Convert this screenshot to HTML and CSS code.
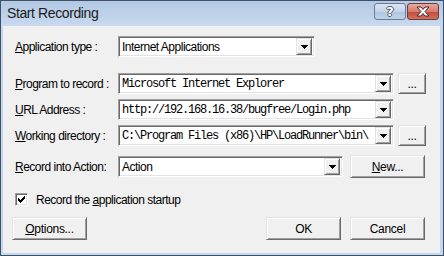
FILE: index.html
```html
<!DOCTYPE html>
<html lang="en">
<head>
    <meta charset="UTF-8">
    <meta name="viewport" content="width=device-width, initial-scale=1.0">
    <title>Start Recording</title>
    <link rel="stylesheet" href="styles.css">
</head>
<body>
    <div class="window">
        <div class="titlebar">
            <span class="title">Start Recording</span>
            <span class="cap help">?</span>
            <span class="cap close">
                <svg width="14" height="11" viewBox="0 0 14 11">
                    <path d="M1 1h4l2 2.5L9 1h4L9 5.5l4 4.5H9L7 7.5 5 10H1l4-4.5z" fill="#fff" stroke="#4a2a2a" stroke-width="1" stroke-linejoin="round"/>
                </svg>
            </span>
        </div>

        <div class="client">
            <div class="row r1">
                <span class="label"><u>A</u>pplication type :</span>
                <div class="combo short">
                    <span class="value">Internet Applications</span>
                    <span class="drop"><svg width="7" height="4"><path d="M0 0h7v1h-1v1h-1v1h-1v1h-1v-1h-1v-1h-1v-1h-1z"/></svg></span>
                </div>
            </div>

            <div class="row r2">
                <span class="label"><u>P</u>rogram to record :</span>
                <div class="combo long">
                    <span class="value mono">Microsoft Internet Explorer</span>
                    <span class="drop"><svg width="7" height="4"><path d="M0 0h7v1h-1v1h-1v1h-1v1h-1v-1h-1v-1h-1v-1h-1z"/></svg></span>
                </div>
                <span class="btn browse">...</span>
            </div>

            <div class="row r3">
                <span class="label"><u>U</u>RL Address :</span>
                <div class="combo long">
                    <span class="value mono">http://192.168.16.38/bugfree/Login.php</span>
                    <span class="drop"><svg width="7" height="4"><path d="M0 0h7v1h-1v1h-1v1h-1v1h-1v-1h-1v-1h-1v-1h-1z"/></svg></span>
                </div>
            </div>

            <div class="row r4">
                <span class="label"><u>W</u>orking directory :</span>
                <div class="combo long">
                    <span class="value mono">C:\Program Files (x86)\HP\LoadRunner\bin\</span>
                    <span class="drop"><svg width="7" height="4"><path d="M0 0h7v1h-1v1h-1v1h-1v1h-1v-1h-1v-1h-1v-1h-1z"/></svg></span>
                </div>
                <span class="btn browse">...</span>
            </div>

            <div class="row r5">
                <span class="label"><u>R</u>ecord into Action:</span>
                <div class="combo mid">
                    <span class="value">Action</span>
                    <span class="drop"><svg width="7" height="4"><path d="M0 0h7v1h-1v1h-1v1h-1v1h-1v-1h-1v-1h-1v-1h-1z"/></svg></span>
                </div>
                <span class="btn new"><u>N</u>ew...</span>
            </div>

            <div class="row check-row">
                <span class="checkbox">
                    <svg width="7" height="7"><path d="M0 2h1v1h1v1h1v-1h1v-1h1v-1h1v-1h1v3h-1v1h-1v1h-1v1h-1v1h-1v-1h-1v-1h-1v-1h-1z"/></svg>
                </span>
                <span class="check-text">Record the <u>a</u>pplication startup</span>
            </div>

            <div class="row actions">
                <span class="btn"><u>O</u>ptions...</span>
                <span class="btn ok">OK</span>
                <span class="btn cancel">Cancel</span>
            </div>
        </div>
    </div>
</body>
</html>
```

FILE: styles.css
```css
body {
    margin: 0;
    font-family: "Liberation Sans", Arial, sans-serif;
    font-size: 12px;
    color: #000;
}

.window {
    width: 444px;
    height: 256px;
    box-sizing: border-box;
    border: 1px solid #3e5068;
    background-color: #c6d8ee;
    display: flex;
    flex-direction: column;
}

.titlebar {
    height: 25px;
    display: flex;
    align-items: flex-start;
    padding: 0 4px 0 6px;
    background: linear-gradient(to bottom, #b3c9e4, #c8d9ee);
}

.title {
    font-size: 14px;
    letter-spacing: -0.4px;
    line-height: 25px;
    color: #1b1b22;
    margin-right: auto;
}

.cap {
    width: 32px;
    height: 17px;
    margin-top: 2px;
    box-sizing: border-box;
    border: 1px solid #6a7b92;
    border-radius: 3px;
    display: flex;
    align-items: center;
    justify-content: center;
}

.help {
    margin-right: 1px;
    background: linear-gradient(to bottom, #dbe6f3 0%, #c3d4ea 50%, #afc5e0 51%, #bed2ea 100%);
    font-family: "DejaVu Sans", sans-serif;
    font-weight: bold;
    font-size: 13px;
    color: #fff;
    text-shadow: 1px 0 #4b5a70, -1px 0 #4b5a70, 0 1px #4b5a70, 0 -1px #4b5a70;
}

.close {
    border-color: #6e3b3b;
    background: linear-gradient(to bottom, #e6aa9e 0%, #d77a6b 50%, #c4493a 51%, #d0705f 100%);
}

.client {
    flex: 1;
    margin: 0 3px 2px 2px;
    padding: 10px 14px 0 9px;
    background-color: #f0f0f0;
    display: flex;
    flex-direction: column;
}

.row {
    display: flex;
    align-items: center;
    height: 21px;
}

.r2 { margin-top: 16px; }
.r3, .r4 { margin-top: 5px; }
.r5 { margin-top: 9px; height: 23px; }

.label {
    width: 103px;
    margin-left: 3px;
    letter-spacing: -0.5px;
    white-space: nowrap;
}

.combo {
    height: 21px;
    box-sizing: border-box;
    display: flex;
    align-items: center;
    background-color: #fff;
    border: 1px solid;
    border-color: #a0a0a0 #fff #fff #a0a0a0;
    box-shadow: inset 1px 1px #696969, inset -1px -1px #e3e3e3;
    padding: 1px 2px 1px 2px;
}

.short { width: 197px; }
.long { width: 276px; }
.mid { width: 225px; }

.value {
    flex: 1;
    overflow: hidden;
    white-space: nowrap;
    letter-spacing: -0.5px;
    padding-left: 1px;
}

.mono {
    font-family: "Liberation Mono", "Courier New", monospace;
    letter-spacing: -1.2px;
}

.drop {
    width: 16px;
    height: 17px;
    box-sizing: border-box;
    flex: none;
    display: flex;
    align-items: center;
    justify-content: center;
    background-color: #f0f0f0;
    border: 1px solid;
    border-color: #e3e3e3 #696969 #696969 #e3e3e3;
    box-shadow: inset 1px 1px #fff, inset -1px -1px #a0a0a0;
}

.drop svg {
    shape-rendering: crispEdges;
}

.btn {
    width: 75px;
    height: 23px;
    box-sizing: border-box;
    display: flex;
    align-items: center;
    justify-content: center;
    letter-spacing: -0.3px;
    background-color: #f0f0f0;
    border: 1px solid;
    border-color: #e3e3e3 #696969 #696969 #e3e3e3;
    box-shadow: inset 1px 1px #fff, inset -1px -1px #a0a0a0;
}

.browse {
    width: 28px;
    height: 21px;
    margin-left: 4px;
}

.new {
    margin-left: 7px;
}

.check-row {
    margin-top: 15px;
    height: 13px;
    margin-left: 3px;
}

.checkbox {
    width: 13px;
    height: 13px;
    box-sizing: border-box;
    display: flex;
    align-items: center;
    justify-content: center;
    background-color: #fff;
    border: 1px solid;
    border-color: #a0a0a0 #fff #fff #a0a0a0;
    box-shadow: inset 1px 1px #696969, inset -1px -1px #e3e3e3;
}

.checkbox svg {
    shape-rendering: crispEdges;
}

.check-text {
    margin-left: 8px;
    letter-spacing: -0.5px;
}

.actions {
    margin-top: 11px;
    height: 23px;
}

.ok {
    margin-left: auto;
}

.cancel {
    margin-left: 9px;
    margin-right: 1px;
}
```
